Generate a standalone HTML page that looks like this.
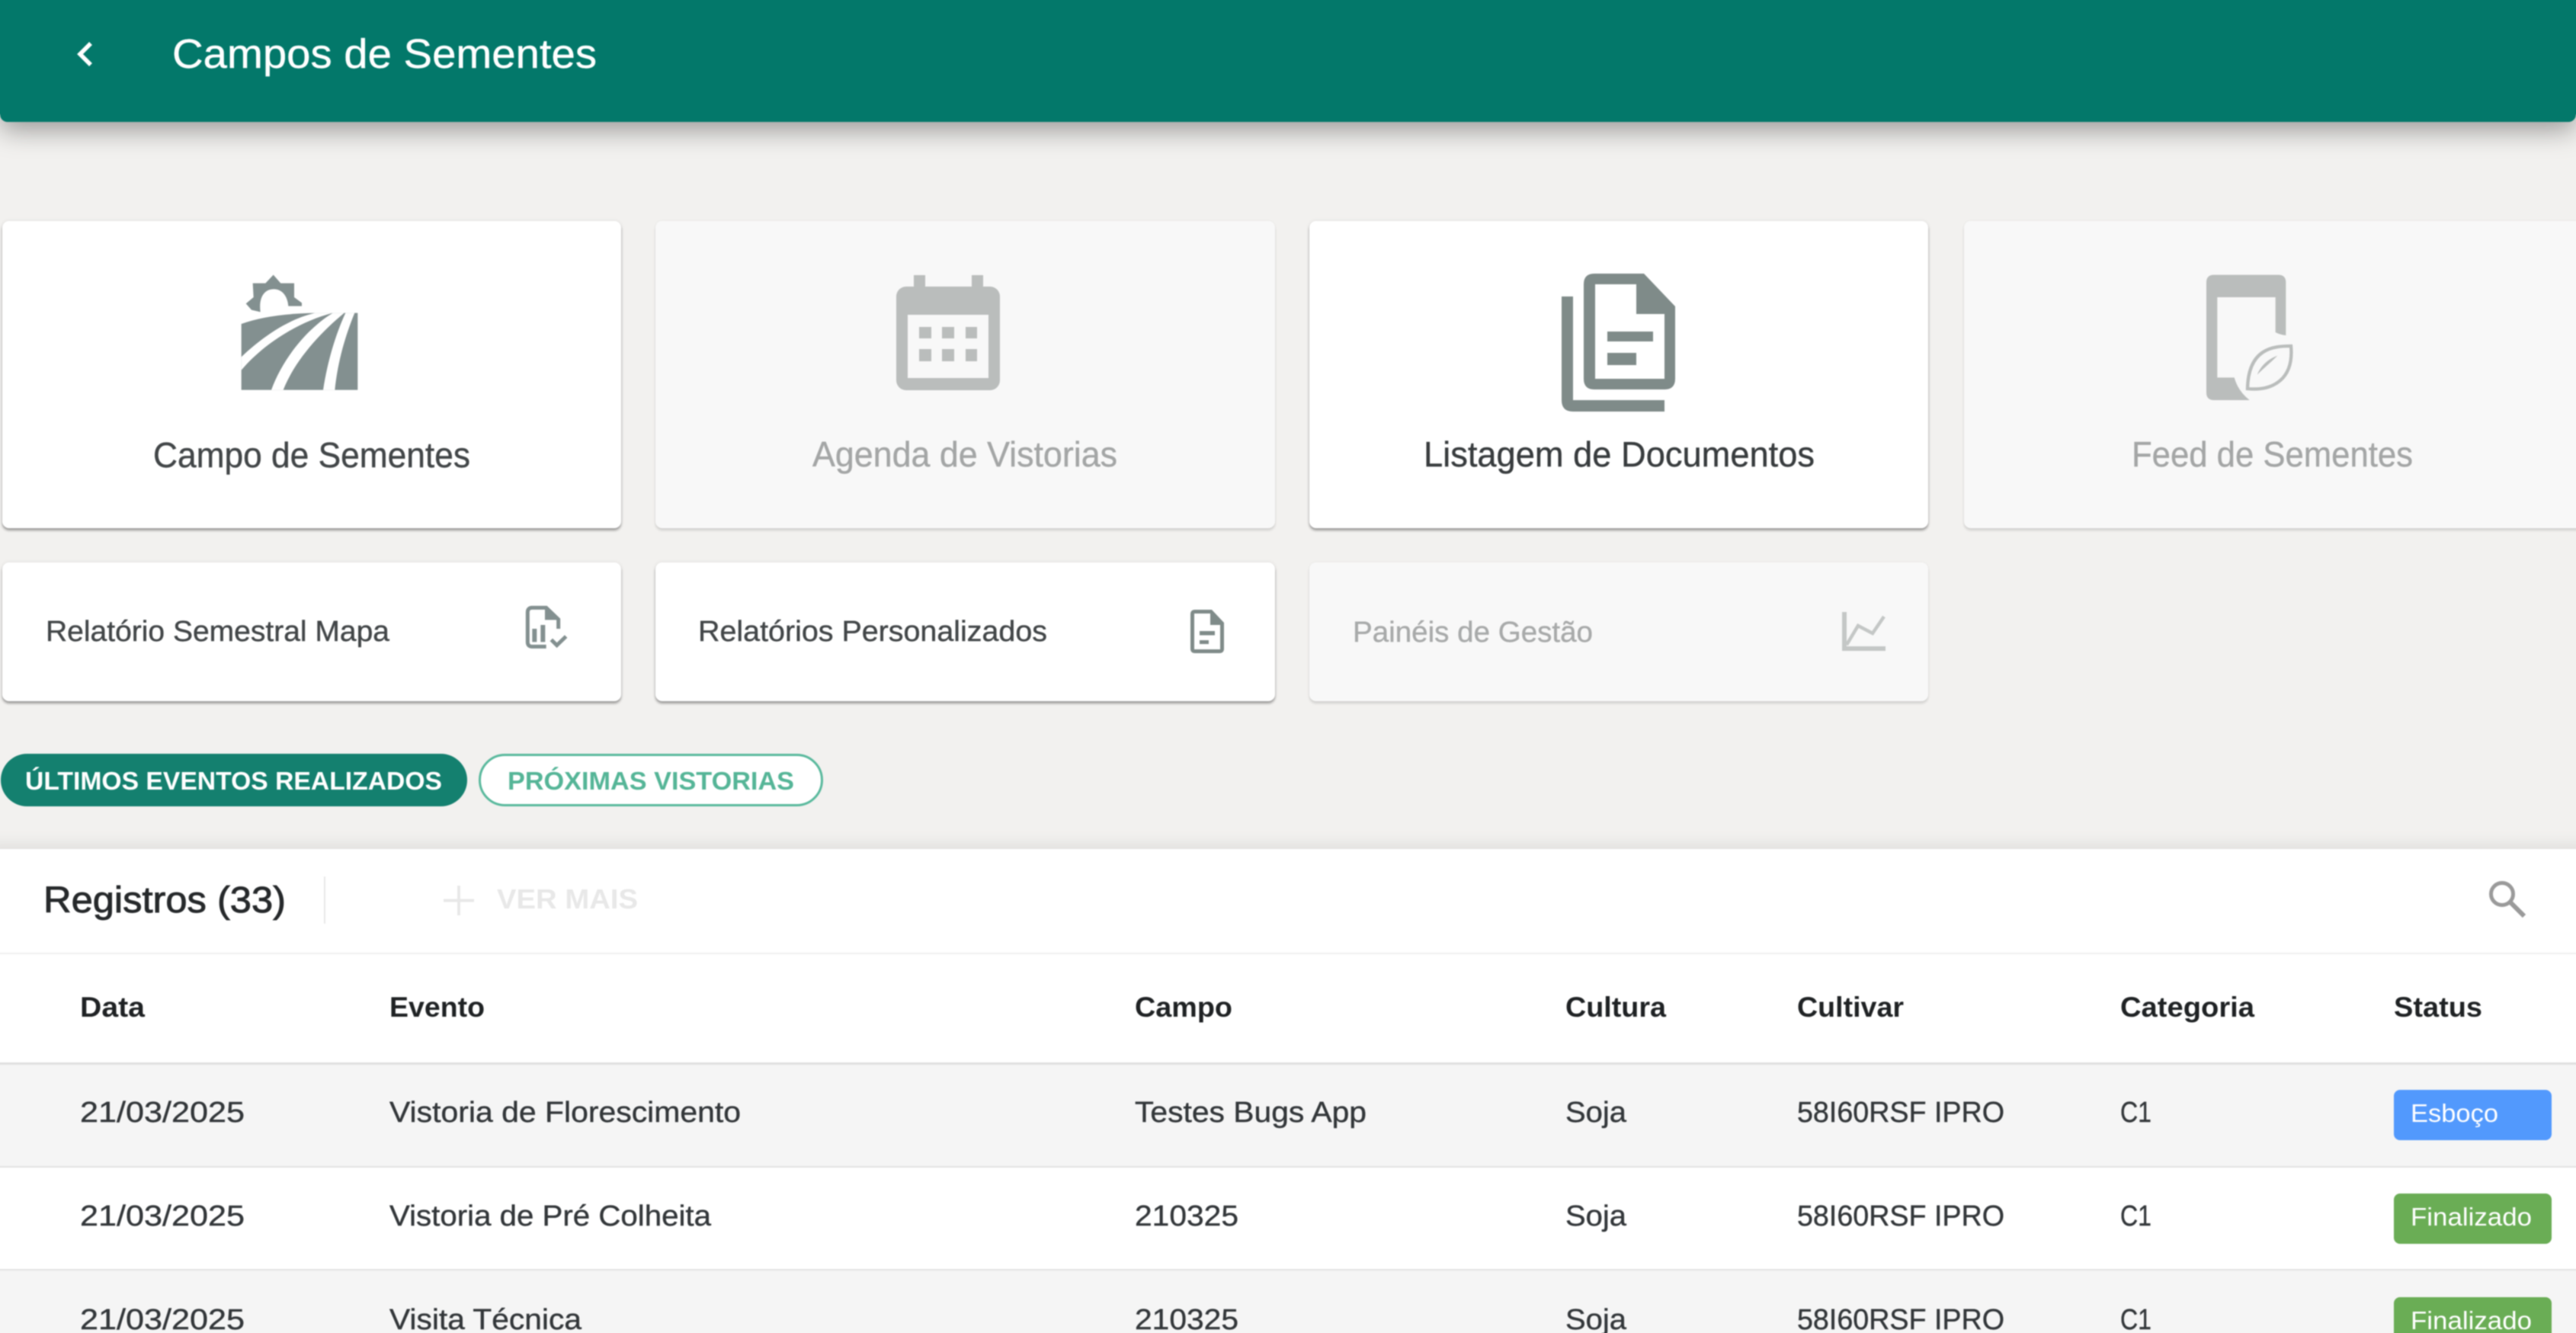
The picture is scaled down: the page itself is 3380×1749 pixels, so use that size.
<!DOCTYPE html>
<html lang="pt-BR">
<head>
<meta charset="utf-8">
<title>Campos de Sementes</title>
<style>
html,body{margin:0;padding:0;width:3380px;height:1749px;overflow:hidden;background:#f2f1ef;}
#w{position:relative;width:3380px;height:1749px;overflow:hidden;background:#f2f1ef;}
#f{position:absolute;left:-20px;top:-20px;width:3420px;height:1789px;filter:blur(.7px);}
#i{position:absolute;left:20px;top:20px;width:3380px;height:1749px;}
.b{position:absolute;box-sizing:border-box;}
.hdr{left:0;top:0;width:3380px;height:160px;background:#03786a;border-radius:0 0 10px 10px;box-shadow:0 11px 34px rgba(0,0,0,.36);}
.c{background:#fff;border-radius:9px;box-shadow:0 3px 3px rgba(0,0,0,.34),0 0 6px rgba(0,0,0,.08);}
.d{background:#f8f8f8;border-radius:9px;box-shadow:0 3px 3px rgba(0,0,0,.13),0 0 5px rgba(0,0,0,.04);}
.p1{left:1px;top:989px;width:612px;height:69px;border-radius:35px;background:#14806f;}
.p2{left:628px;top:989px;width:452px;height:69px;border-radius:35px;background:#fff;border:3px solid #5ab99d;}
.panel{left:-20px;top:1114px;width:3420px;height:655px;background:#fff;box-shadow:0 -4px 22px rgba(0,0,0,.09);}
svg{position:absolute;left:0;top:0;overflow:visible;}
text{font-family:"Liberation Sans",sans-serif;}
.t{stroke-width:.4;paint-order:stroke;}
</style>
</head>
<body>
<div id="w"><div id="f"><div id="i">
<div class="b hdr"></div>
<div class="b" style="left:-20px;top:-20px;width:3420px;height:20px;background:#03786a"></div>
<div class="b" style="left:-20px;top:0;width:20px;height:150px;background:#03786a"></div>
<div class="b" style="left:3380px;top:0;width:20px;height:150px;background:#03786a"></div>
<div class="b c" style="left:3px;top:290px;width:812px;height:403px"></div>
<div class="b d" style="left:860px;top:290px;width:813px;height:403px"></div>
<div class="b c" style="left:1718px;top:290px;width:812px;height:403px"></div>
<div class="b d" style="left:2577px;top:290px;width:830px;height:403px"></div>
<div class="b c" style="left:3px;top:738px;width:812px;height:182px"></div>
<div class="b c" style="left:860px;top:738px;width:813px;height:182px"></div>
<div class="b d" style="left:1718px;top:738px;width:812px;height:182px"></div>
<div class="b p1"></div>
<div class="b p2"></div>
<div class="b panel"></div>
<div class="b" style="left:-20px;top:1250px;width:3420px;height:2px;background:#f0f0f0"></div>
<div class="b" style="left:-20px;top:1394px;width:3420px;height:3px;background:#e0e0e0"></div>
<div class="b" style="left:-20px;top:1397px;width:3420px;height:133px;background:#f5f5f5"></div>
<div class="b" style="left:-20px;top:1530px;width:3420px;height:2px;background:#e2e2e2"></div>
<div class="b" style="left:-20px;top:1665px;width:3420px;height:2px;background:#e2e2e2"></div>
<div class="b" style="left:-20px;top:1667px;width:3420px;height:102px;background:#f5f5f5"></div>
<div class="b" style="left:425px;top:1150px;width:2px;height:62px;background:#e8e8e8"></div>
<div class="b" style="left:3141px;top:1430px;width:207px;height:66px;border-radius:8px;background:#5299fd"></div>
<div class="b" style="left:3141px;top:1566px;width:207px;height:66px;border-radius:8px;background:#6aad55"></div>
<div class="b" style="left:3141px;top:1702px;width:207px;height:66px;border-radius:8px;background:#6aad55"></div>

<svg width="3380" height="1749" viewBox="0 0 3380 1749" xmlns="http://www.w3.org/2000/svg">
<!-- header -->
<path d="M119 57 L105 71 L119 85" fill="none" stroke="#fff" stroke-width="5.5"/>
<text class="t" stroke="#fff" x="226" y="89" font-size="54" fill="#fff" textLength="557" lengthAdjust="spacingAndGlyphs">Campos de Sementes</text>

<!-- field icon -->
<g transform="translate(280,340) scale(.33333)" fill="#839090">
<path d="M128 175 L158 150 L155 95 H205 L236 62 L265 95 H318 L318 150 L348 172 V185 H295 C292 145 270 118 238 118 C200 118 178 150 185 208 L150 200 Z"/>
<path d="M110 255 Q220 215 400 212 H568 V515 H110 Z"/>
<path fill="#fff" d="M110 385 C200 300 300 235 400 212 H470 C340 245 200 330 110 437 Z"/>
<path fill="#fff" d="M228 515 C270 400 360 280 470 212 H515 C420 290 320 400 275 515 Z"/>
<path fill="#fff" d="M432 515 C450 400 480 300 520 212 H556 C520 300 490 400 478 515 Z"/>
</g>
<!-- calendar -->
<g fill="#babdbc">
<rect x="1199" y="361" width="15" height="20"/><rect x="1275" y="361" width="15" height="20"/>
<rect x="1176" y="376" width="136" height="136" rx="13"/>
<rect x="1191" y="413" width="106" height="83" fill="#f8f8f8"/>
<rect x="1206" y="429" width="16" height="15"/><rect x="1236" y="429" width="16" height="15"/><rect x="1267" y="429" width="15" height="15"/>
<rect x="1206" y="458" width="16" height="16"/><rect x="1236" y="458" width="16" height="16"/><rect x="1267" y="458" width="15" height="16"/>
</g>
<!-- documents -->
<g fill="#7f8b89">
<path d="M2049 389 H2064 V525 H2184 V540 H2064 Q2049 540 2049 525 Z"/>
<path fill-rule="evenodd" d="M2092 359 H2157 L2198 402 V497 Q2198 511 2184 511 H2092 Q2078 511 2078 497 V373 Q2078 359 2092 359 Z M2093 373 V497 H2184 V412 H2147 V373 Z"/>
<rect x="2109" y="435" width="60" height="13"/><rect x="2109" y="463" width="38" height="16"/>
</g>
<!-- feed -->
<g transform="translate(2850,340) scale(.33333)" fill="#babdbc">
<path d="M165 62 H418 Q448 62 448 92 V300 Q425 298 407 288 V150 H178 V466 H245 Q260 520 305 555 H165 Q135 555 135 525 V92 Q135 62 165 62 Z"/>
<path d="M468 342 C400 342 300 350 297 510 C400 520 480 470 468 342 Z" fill="none" stroke="#babdbc" stroke-width="13"/>
<path d="M335 455 C350 420 375 395 415 380 C385 410 360 430 335 455 Z"/>
</g>

<!-- small icons -->
<g transform="translate(660,780) scale(.33333)">
<path d="M170 205 H115 Q97 205 97 187 V70 Q97 52 115 52 H170 L218 98 V135" fill="none" stroke="#839090" stroke-width="15"/>
<path d="M165 55 V100 H215 Z" fill="#839090"/>
<rect x="115" y="135" width="18" height="52" fill="#839090"/><rect x="148" y="120" width="18" height="67" fill="#839090"/>
<path d="M190 178 L212 200 L248 165" fill="none" stroke="#839090" stroke-width="15"/>
</g>
<path fill="#7f8b89" fill-rule="evenodd" d="M1568 800 H1590 L1606 817 V851 Q1606 857 1600 857 H1568 Q1562 857 1562 851 V806 Q1562 800 1568 800 Z M1567 805 V852 H1601 V820 H1588 V805 Z"/>
<rect x="1574" y="828" width="20" height="5.5" fill="#7f8b89"/><rect x="1574" y="840" width="12" height="5" fill="#7f8b89"/>
<g fill="none" stroke="#c4c7c6">
<path d="M2420 803 V851 H2474" stroke-width="6"/>
<path d="M2423 846 L2438 821 L2457 831 L2472 809" stroke-width="4.5"/>
</g>

<!-- card labels -->
<g font-size="46">
<text class="t" stroke="#424648" x="201" y="613" fill="#424648" textLength="416" lengthAdjust="spacingAndGlyphs">Campo de Sementes</text>
<text class="t" stroke="#a4a6a6" x="1066" y="612" fill="#a4a6a6" textLength="400" lengthAdjust="spacingAndGlyphs">Agenda de Vistorias</text>
<text class="t" stroke="#383c3e" x="1868" y="612" fill="#383c3e" textLength="513" lengthAdjust="spacingAndGlyphs">Listagem de Documentos</text>
<text class="t" stroke="#a4a6a6" x="2797" y="612" fill="#a4a6a6" textLength="369" lengthAdjust="spacingAndGlyphs">Feed de Sementes</text>
</g>
<g font-size="38">
<text class="t" stroke="#424648" x="60" y="841" fill="#424648" textLength="451" lengthAdjust="spacingAndGlyphs">Relatório Semestral Mapa</text>
<text class="t" stroke="#424648" x="916" y="841" fill="#424648" textLength="458" lengthAdjust="spacingAndGlyphs">Relatórios Personalizados</text>
<text class="t" stroke="#a8aaaa" x="1775" y="842" fill="#a8aaaa" textLength="315" lengthAdjust="spacingAndGlyphs">Painéis de Gestão</text>
</g>
<!-- pills -->
<g font-size="33" font-weight="bold">
<text x="33" y="1036" fill="#fff" textLength="547" lengthAdjust="spacingAndGlyphs">ÚLTIMOS EVENTOS REALIZADOS</text>
<text x="666" y="1036" fill="#55b597" textLength="376" lengthAdjust="spacingAndGlyphs">PRÓXIMAS VISTORIAS</text>
</g>
<!-- toolbar -->
<text x="57" y="1197" font-size="48" fill="#26292b" stroke="#26292b" stroke-width=".9" textLength="318" lengthAdjust="spacingAndGlyphs">Registros (33)</text>
<path d="M602 1162 V1201 M582 1181.5 H622" stroke="#e8e8e8" stroke-width="4" fill="none"/>
<text x="652" y="1192" font-size="36" font-weight="bold" fill="#e8e8e8" textLength="185" lengthAdjust="spacingAndGlyphs">VER MAIS</text>
<g fill="none" stroke="#9a9a9a">
<circle cx="3283" cy="1173" r="14.5" stroke-width="5"/>
<path d="M3294 1184 L3312 1202" stroke-width="6"/>
</g>
<!-- table head -->
<g font-size="37" font-weight="bold" fill="#1f2224">
<text x="105" y="1334" textLength="85" lengthAdjust="spacingAndGlyphs">Data</text>
<text x="511" y="1334" textLength="125" lengthAdjust="spacingAndGlyphs">Evento</text>
<text x="1489" y="1334" textLength="128" lengthAdjust="spacingAndGlyphs">Campo</text>
<text x="2054" y="1334" textLength="132" lengthAdjust="spacingAndGlyphs">Cultura</text>
<text x="2358" y="1334" textLength="140" lengthAdjust="spacingAndGlyphs">Cultivar</text>
<text x="2782" y="1334" textLength="176" lengthAdjust="spacingAndGlyphs">Categoria</text>
<text x="3141" y="1334" textLength="116" lengthAdjust="spacingAndGlyphs">Status</text>
</g>
<!-- rows -->
<g font-size="38" fill="#33373a" stroke="#33373a" stroke-width=".4">
<text x="105" y="1472" textLength="216" lengthAdjust="spacingAndGlyphs">21/03/2025</text>
<text x="511" y="1472" textLength="461" lengthAdjust="spacingAndGlyphs">Vistoria de Florescimento</text>
<text x="1489" y="1472" textLength="304" lengthAdjust="spacingAndGlyphs">Testes Bugs App</text>
<text x="2054" y="1472" textLength="80" lengthAdjust="spacingAndGlyphs">Soja</text>
<text x="2358" y="1472" textLength="272" lengthAdjust="spacingAndGlyphs">58I60RSF IPRO</text>
<text x="2782" y="1472" textLength="41" lengthAdjust="spacingAndGlyphs">C1</text>

<text x="105" y="1608" textLength="216" lengthAdjust="spacingAndGlyphs">21/03/2025</text>
<text x="511" y="1608" textLength="422" lengthAdjust="spacingAndGlyphs">Vistoria de Pré Colheita</text>
<text x="1489" y="1608" textLength="136" lengthAdjust="spacingAndGlyphs">210325</text>
<text x="2054" y="1608" textLength="80" lengthAdjust="spacingAndGlyphs">Soja</text>
<text x="2358" y="1608" textLength="272" lengthAdjust="spacingAndGlyphs">58I60RSF IPRO</text>
<text x="2782" y="1608" textLength="41" lengthAdjust="spacingAndGlyphs">C1</text>

<text x="105" y="1744" textLength="216" lengthAdjust="spacingAndGlyphs">21/03/2025</text>
<text x="511" y="1744" textLength="252" lengthAdjust="spacingAndGlyphs">Visita Técnica</text>
<text x="1489" y="1744" textLength="136" lengthAdjust="spacingAndGlyphs">210325</text>
<text x="2054" y="1744" textLength="80" lengthAdjust="spacingAndGlyphs">Soja</text>
<text x="2358" y="1744" textLength="272" lengthAdjust="spacingAndGlyphs">58I60RSF IPRO</text>
<text x="2782" y="1744" textLength="41" lengthAdjust="spacingAndGlyphs">C1</text>
</g>
<g font-size="33" fill="#fff">
<text x="3163" y="1472" textLength="115" lengthAdjust="spacingAndGlyphs">Esboço</text>
<text x="3163" y="1608" textLength="159" lengthAdjust="spacingAndGlyphs">Finalizado</text>
<text x="3163" y="1744" textLength="159" lengthAdjust="spacingAndGlyphs">Finalizado</text>
</g>
</svg>
</div></div></div>
</body>
</html>
